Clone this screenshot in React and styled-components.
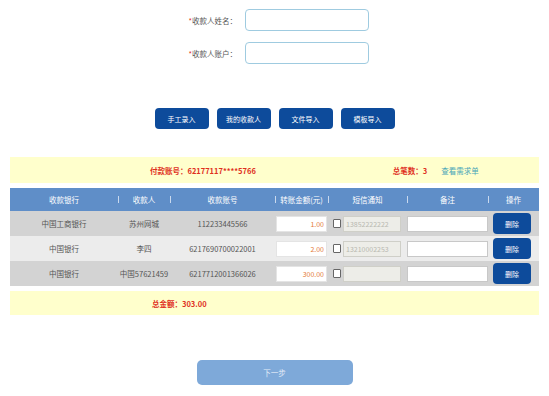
import React from 'react';
import styled, {createGlobalStyle} from 'styled-components';

const Global = createGlobalStyle`
body {
  margin: 0;
  background: #ffffff;
  font-family: "Noto Sans CJK SC", "Noto Sans", sans-serif;
}
`;

const Page = styled.div`
width: 549px;
height: 396px;
padding-top: 9px;
box-sizing: border-box;
overflow: hidden;
`;

const Form = styled.div`
display: flex;
flex-direction: column;
gap: 11px;
`;

const FormRow = styled.div`
display: flex;
align-items: center;
`;

const Label = styled.label`
width: 245px;
text-align: right;
padding-right: 8px;
box-sizing: border-box;
font-size: 7.5px;
color: #555;
`;

const Star = styled.span`
color: #e0301e;
`;

const TextInput = styled.input`
width: 124px;
height: 22px;
box-sizing: border-box;
border: 1px solid #9fcbe0;
border-radius: 4px;
background: #fff;
outline: none;
`;

const ButtonBar = styled.div`
display: flex;
justify-content: center;
gap: 8px;
margin-top: 44px;
`;

const BlueButton = styled.button`
width: 54px;
height: 21px;
border: none;
border-radius: 4px;
background: #0d4b9b;
color: #fff;
font-family: inherit;
font-size: 7px;
padding: 0;
`;

const InfoBar = styled.div`
margin: 28px 10px 0;
height: 26px;
background: #ffffcc;
display: flex;
align-items: center;
font-size: 7.5px;
`;

const InfoText = styled.span`
margin-left: ${p => p.offset}px;
color: ${p => p.teal ? '#49a6b8' : '#e0301e'};
font-weight: ${p => p.teal ? 'normal' : 'bold'};
`;

const Table = styled.table`
margin: 5px 10px 0;
width: 529px;
border-collapse: collapse;
table-layout: fixed;
font-size: 7.5px;
color: #555;
`;

const Th = styled.th`
position: relative;
height: 23px;
padding: 0;
background: #5f8ec8;
color: #fff;
font-weight: normal;
&::before {
  content: '';
  display: ${p => p.first ? 'none' : 'block'};
  position: absolute;
  left: 0;
  top: 8px;
  width: 1px;
  height: 7px;
  background: #c9d9ee;
}
`;

const Tr = styled.tr`
height: 25px;
background: ${p => p.light ? '#ececec' : '#d3d3d3'};
`;

const Td = styled.td`
padding: 0;
text-align: ${p => p.align || 'center'};
`;

const Amount = styled.input`
width: 51px;
height: 16px;
margin-left: 1px;
box-sizing: border-box;
border: 1px solid #e4e4e4;
background: #fff;
text-align: right;
color: #e47a35;
font-family: inherit;
font-size: 7px;
padding: 0 2px;
vertical-align: middle;
`;

const Check = styled.span`
display: inline-block;
width: 6px;
height: 7px;
border: 1px solid #666;
background: #fff;
border-radius: 1px;
margin: 0 2px 0 5px;
vertical-align: middle;
`;

const Sms = styled.input`
width: 58px;
height: 16px;
box-sizing: border-box;
border: 1px solid #cfcfc8;
background: #ededE8;
color: #b8b8b0;
font-family: inherit;
font-size: 7px;
padding: 0 2px;
vertical-align: middle;
`;

const Remark = styled.input`
width: 81px;
height: 16px;
box-sizing: border-box;
border: 1px solid #c8c8c8;
background: #fff;
vertical-align: middle;
`;

const DeleteButton = styled(BlueButton)`
width: 38px;
height: 21px;
margin-left: 5px;
vertical-align: middle;
`;

const TotalBar = styled.div`
margin: 5px 10px 0;
height: 24px;
background: #ffffcc;
display: flex;
align-items: center;
padding-left: 142px;
font-size: 7.5px;
font-weight: bold;
color: #e0301e;
`;

const NextButton = styled.button`
display: block;
margin: 45px auto 0;
width: 156px;
height: 25px;
border: none;
border-radius: 5px;
background: #7ea9d9;
color: #e4edf8;
font-family: inherit;
font-size: 7.5px;
`;

const rows = [
  {bank: '中国工商银行', name: '苏州网城', acct: '112233445566', amt: '1.00', sms: '13852222222'},
  {bank: '中国银行', name: '李四', acct: '6217690700022001', amt: '2.00', sms: '13210002253'},
  {bank: '中国银行', name: '中国57621459', acct: '6217712001366026', amt: '300.00', sms: ''},
];

const App = () => {
  return (
    <Page>
      <Global/>
      <Form>
        <FormRow>
          <Label><Star>*</Star>收款人姓名：</Label>
          <TextInput/>
        </FormRow>
        <FormRow>
          <Label><Star>*</Star>收款人账户：</Label>
          <TextInput/>
        </FormRow>
      </Form>
      <ButtonBar>
        <BlueButton>手工录入</BlueButton>
        <BlueButton>我的收款人</BlueButton>
        <BlueButton>文件导入</BlueButton>
        <BlueButton>模板导入</BlueButton>
      </ButtonBar>
      <InfoBar>
        <InfoText offset={140}>付款账号：62177117****5766</InfoText>
        <InfoText offset={137}>总笔数：3</InfoText>
        <InfoText offset={14} teal>查看需求单</InfoText>
      </InfoBar>
      <Table>
        <colgroup>
          <col style={{width: 108}}/>
          <col style={{width: 52}}/>
          <col style={{width: 105}}/>
          <col style={{width: 53}}/>
          <col style={{width: 79}}/>
          <col style={{width: 81}}/>
          <col style={{width: 51}}/>
        </colgroup>
        <thead>
          <tr>
            <Th first>收款银行</Th>
            <Th>收款人</Th>
            <Th>收款账号</Th>
            <Th>转账金额(元)</Th>
            <Th>短信通知</Th>
            <Th>备注</Th>
            <Th>操作</Th>
          </tr>
        </thead>
        <tbody>
          {rows.map((r, i) => (
            <Tr key={i} light={i === 1}>
              <Td>{r.bank}</Td>
              <Td>{r.name}</Td>
              <Td>{r.acct}</Td>
              <Td align='left'><Amount defaultValue={r.amt}/></Td>
              <Td align='left'><Check/><Sms disabled defaultValue={r.sms}/></Td>
              <Td align='left'><Remark/></Td>
              <Td align='left'><DeleteButton>删除</DeleteButton></Td>
            </Tr>
          ))}
        </tbody>
      </Table>
      <TotalBar>总金额：303.00</TotalBar>
      <NextButton>下一步</NextButton>
    </Page>
  );
};

export default App;
